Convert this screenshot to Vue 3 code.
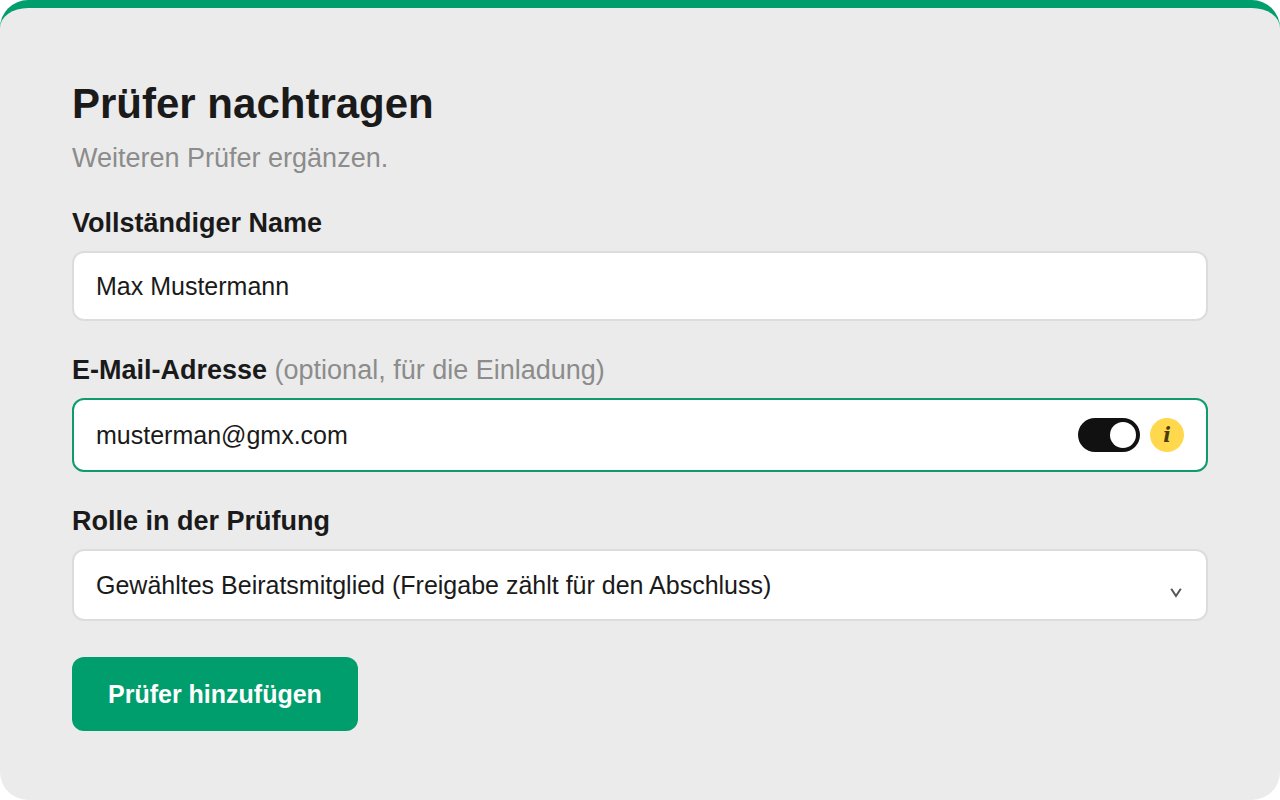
<script setup>
import { ref } from 'vue'

const name = ref('Max Mustermann')
const email = ref('musterman@gmx.com')
const invite = ref(true)
const role = ref('elected')
</script>

<template>
  <main class="card">
    <h1>Prüfer nachtragen</h1>
    <p class="lead">Weiteren Prüfer ergänzen.</p>
    <form @submit.prevent>
      <div class="group">
        <label for="name">Vollständiger Name</label>
        <input id="name" v-model="name" class="field" type="text" />
      </div>
      <div class="group">
        <label for="email">E-Mail-Adresse <span class="hint">(optional, für die Einladung)</span></label>
        <div class="field composite">
          <input id="email" v-model="email" class="bare" type="email" />
          <input v-model="invite" class="switch" type="checkbox" role="switch" aria-label="Einladung senden" />
          <button class="info" type="button" aria-label="Information">i</button>
        </div>
      </div>
      <div class="group">
        <label for="role">Rolle in der Prüfung</label>
        <div class="select-wrap">
          <select id="role" v-model="role" class="field">
            <option value="elected">Gewähltes Beiratsmitglied (Freigabe zählt für den Abschluss)</option>
          </select>
          <svg class="chevron" viewBox="0 0 12 10" aria-hidden="true"><path d="M1.2 0.8 L6 8 L10.8 0.8" /></svg>
        </div>
      </div>
      <button class="submit" type="submit">Prüfer hinzufügen</button>
    </form>
  </main>
</template>

<style>
body { margin: 0; background: #fff; }
</style>

<style scoped>
* { box-sizing: border-box; }
.card {
  min-height: 100vh;
  padding: 72px 72px 64px;
  border-top: 8px solid #009e6d;
  border-radius: 28px;
  background: #ebebeb;
  color: #1a1a1a;
  font-family: "Liberation Sans", Arial, sans-serif;
}
h1 { margin: 0; font-size: 42px; line-height: 48px; font-weight: 700; }
.lead { margin: 14px 0 33px; font-size: 27px; line-height: 32px; color: #8c8c8c; }
.group { margin-bottom: 33px; }
label { display: block; margin-bottom: 12px; font-size: 27px; line-height: 32px; font-weight: 700; }
.hint { font-weight: 400; color: #8c8c8c; }
.field {
  display: block;
  width: 100%;
  height: 70px;
  padding: 0 22px;
  border: 2px solid #dcdcdc;
  border-radius: 12px;
  outline: 0;
  background: #fff;
  color: #1a1a1a;
  font: 25px/32px "Liberation Sans", Arial, sans-serif;
}
.composite { display: flex; align-items: center; gap: 10px; height: 74px; border-color: #109b6d; }
.bare { flex: 1; min-width: 0; padding: 0; border: 0; outline: 0; background: none; color: inherit; font: inherit; }
.switch {
  appearance: none;
  display: flex;
  width: 62px;
  height: 34px;
  margin: 0;
  padding: 4px;
  border-radius: 17px;
  background: #888;
}
.switch::before { content: ""; width: 26px; height: 26px; border-radius: 50%; background: #fff; }
.switch:checked { justify-content: flex-end; background: #111; }
.info {
  width: 34px;
  height: 34px;
  padding: 0;
  border: 0;
  border-radius: 50%;
  background: #ffd84d;
  color: #4a3b0c;
  font: italic 700 20px/34px "DejaVu Serif", serif;
}
.select-wrap { position: relative; }
.select-wrap select { appearance: none; height: 72px; }
.chevron { position: absolute; right: 26px; bottom: 23px; width: 12px; height: 10px; fill: none; stroke: #555; stroke-width: 2; pointer-events: none; }
.submit {
  display: block;
  margin-top: 36px;
  padding: 21px 36px;
  border: 0;
  border-radius: 12px;
  background: #009e6d;
  color: #fff;
  font: 700 25px/32px "Liberation Sans", Arial, sans-serif;
}
</style>
